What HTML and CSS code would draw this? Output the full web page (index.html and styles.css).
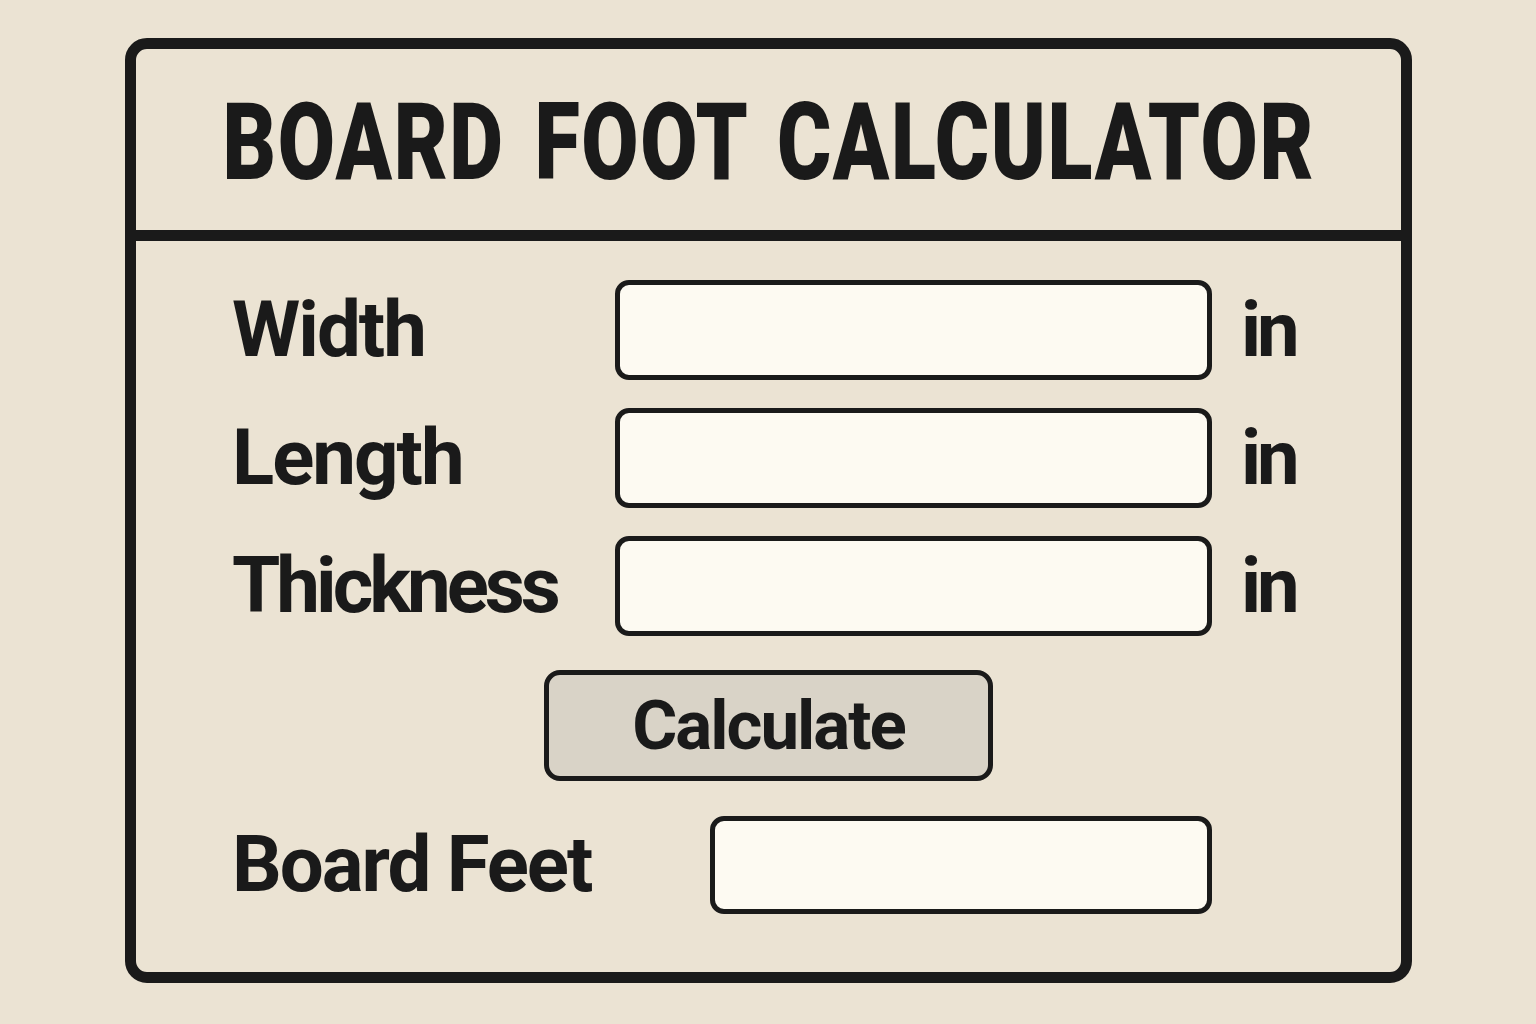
FILE: index.html
```html
<!DOCTYPE html>
<html lang="en">
<head>
  <meta charset="UTF-8">
  <title>Board Foot Calculator</title>
  <meta name="viewport" content="width=device-width, initial-scale=1">
  <link rel="stylesheet" href="styles.css">
</head>
<body>
  <div class="panel">
    <header class="panel-head">
      <h1>BOARD FOOT CALCULATOR</h1>
    </header>
    <form class="panel-body" id="boardForm">
      <div class="fields">
        <label for="width">Width</label>
        <input type="text" id="width" class="field">
        <span class="unit">in</span>

        <label for="length">Length</label>
        <input type="text" id="length" class="field">
        <span class="unit">in</span>

        <label for="thickness" class="tight">Thickness</label>
        <input type="text" id="thickness" class="field">
        <span class="unit">in</span>
      </div>
      <button type="button" id="calcBtn" class="calc-btn">Calculate</button>
      <div class="result-row">
        <label for="boardFeet">Board Feet</label>
        <output id="boardFeet" class="field result-box"></output>
      </div>
    </form>
  </div>

  <script>
    // board feet = width x length x thickness / 144 (all inches)
    document.getElementById("calcBtn").addEventListener("click", function() {
      const w = parseFloat(document.getElementById("width").value);
      const l = parseFloat(document.getElementById("length").value);
      const t = parseFloat(document.getElementById("thickness").value);
      const out = document.getElementById("boardFeet");
      if (isNaN(w) || isNaN(l) || isNaN(t)) {
        out.textContent = "";
        return;
      }
      out.textContent = (w * l * t / 144).toFixed(2);
    });
  </script>
</body>
</html>
```

FILE: styles.css
```css
:root {
  --ink: #1a1a1a;
  --paper: #ebe3d3;
  --field-bg: #fdfaf2;
  --btn-bg: #d9d3c7;
}
* {
  box-sizing: border-box;
}
body {
  margin: 0;
  padding: 38px 0 0 125px;
  background: var(--paper);
  color: var(--ink);
  font-family: Roboto, "Liberation Sans", sans-serif;
}
.panel {
  width: 1287px;
  height: 945px;
  border: 11px solid var(--ink);
  border-radius: 22px;
  display: flex;
  flex-direction: column;
}
.panel-head {
  height: 192px;
  padding-top: 6px;
  border-bottom: 11px solid var(--ink);
  display: flex;
  align-items: center;
  justify-content: center;
  overflow: hidden;
}
h1 {
  margin: 0;
  font-family: Roboto, "Liberation Sans", sans-serif;
  font-weight: 900;
  font-size: 107px;
  line-height: 1;
  letter-spacing: 2px;
  word-spacing: 10px;
  white-space: nowrap;
  transform: scaleX(0.775);
}
.panel-body {
  display: flex;
  flex-direction: column;
  align-items: flex-start;
  padding-top: 39px;
}
.fields {
  margin-left: 96px;
  display: grid;
  grid-template-columns: 383px 597px auto;
  row-gap: 28px;
  align-items: center;
}
label {
  font-weight: 700;
  font-size: 78px;
  line-height: 1;
  letter-spacing: -2px;
}
label.tight {
  letter-spacing: -4px;
}
.field {
  display: block;
  width: 597px;
  height: 100px;
  border: 5px solid var(--ink);
  border-radius: 14px;
  background: var(--field-bg);
  font-family: Roboto, sans-serif;
  font-size: 48px;
  padding: 0 20px;
  outline: none;
}
.unit {
  padding-left: 29px;
  font-weight: 700;
  font-size: 76px;
  line-height: 1;
  letter-spacing: -4px;
}
.calc-btn {
  align-self: center;
  margin-top: 34px;
  width: 449px;
  height: 111px;
  border: 5px solid var(--ink);
  border-radius: 16px;
  background: var(--btn-bg);
  color: var(--ink);
  font-family: Roboto, sans-serif;
  font-weight: 700;
  font-size: 69px;
  letter-spacing: -2px;
  cursor: pointer;
}
.result-row {
  margin-left: 96px;
  margin-top: 35px;
  display: flex;
  align-items: center;
}
.result-row label {
  width: 478px;
}
.result-box {
  width: 502px;
  height: 98px;
  line-height: 88px;
}
```
